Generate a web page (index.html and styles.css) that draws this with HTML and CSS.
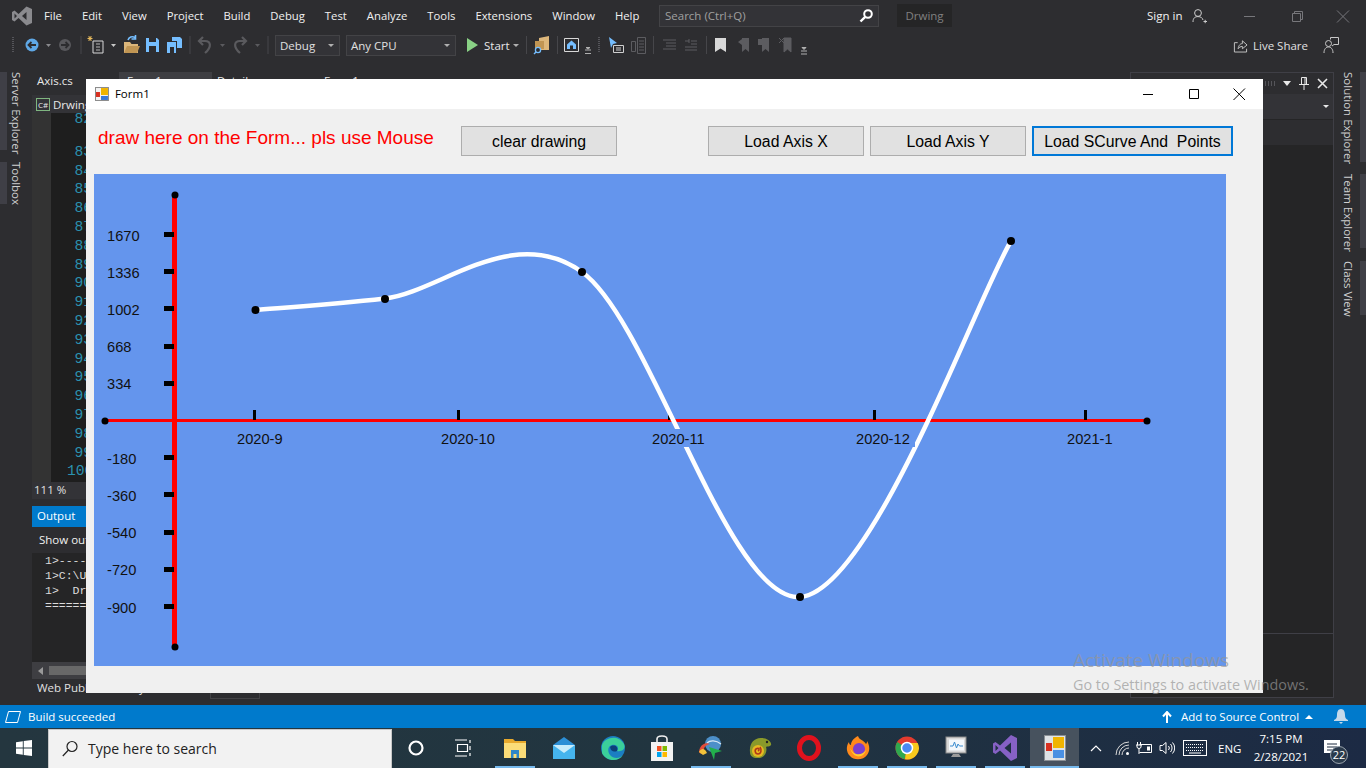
FILE: index.html
```html
<!DOCTYPE html>
<html lang="en">
<head>
    <meta charset="UTF-8">
    <title>Drwing - Form1</title>
    <link rel="stylesheet" href="styles.css">
</head>
<body>
    <div class="ide">
        <!-- barra de titulo -->
        <div class="titlebar">
            <svg class="vs-logo" width="20" height="20" viewBox="0 0 20 20"><path d="M14.5 0.5 L20 3 V17 L14.5 19.5 L6.5 12 L2.5 15.5 L0 14 V6 L2.5 4.5 L6.5 8 Z M14.5 6 L10 10 L14.5 14 Z M2.5 7.5 V12.5 L5 10 Z" fill="#8a8a8e" fill-rule="evenodd"/></svg>
            <nav class="menu">
                <span>File</span><span>Edit</span><span>View</span><span>Project</span><span>Build</span><span>Debug</span><span>Test</span><span>Analyze</span><span>Tools</span><span>Extensions</span><span>Window</span><span>Help</span>
            </nav>
            <div class="searchbox">
                <span>Search (Ctrl+Q)</span>
                <svg width="16" height="16" viewBox="0 0 16 16"><circle cx="10" cy="6" r="3.8" fill="none" stroke="#fff" stroke-width="2"/><path d="M7.2 8.8 L2.5 13.5" stroke="#fff" stroke-width="2.4"/></svg>
            </div>
            <div class="solution-name">Drwing</div>
            <div class="signin">Sign in</div>
            <svg class="user-ic" width="15" height="16" viewBox="0 0 15 16"><circle cx="6" cy="5" r="3.4" fill="none" stroke="#ccc"/><path d="M1 14 C1 10 3 8.6 6 8.6 C9 8.6 10.5 10 11 12 M11.5 13.5 H15 M13.2 11.8 V15.2" fill="none" stroke="#ccc"/></svg>
            <svg class="win-btns" width="107" height="14" viewBox="0 0 107 14"><path d="M0 7.5 H11" stroke="#77777b"/><path d="M48.5 4.5 H56.5 V12.5 H48.5 Z M50.5 4.5 V2.5 H58.5 V10.5 H56.5" fill="none" stroke="#77777b"/><path d="M93 1.500 L105 13.500 M105 1.500 L93 13.500" stroke="#77777b"/></svg>
        </div>

        <!-- barra de ferramentas -->
        <div class="toolbar">
            <svg class="strip-a" width="275" height="24" viewBox="0 0 275 24">
                <path d="M13 4 V20" stroke="#55555a" stroke-width="2" stroke-dasharray="1 1"/>
                <circle cx="32" cy="12" r="6.5" fill="#5fa8e6"/><path d="M36 12 H29 M31.5 9 L28.5 12 L31.5 15" fill="none" stroke="#2d2d30" stroke-width="1.8"/>
                <path d="M46 11 H51 L48.5 14 Z" fill="#8a8a8e"/>
                <circle cx="65" cy="12" r="6" fill="#58585c"/><path d="M61 12 H68 M65.5 9 L68.5 12 L65.5 15" fill="none" stroke="#2d2d30" stroke-width="1.8"/>
                <path d="M81 3 V21" stroke="#46464a"/>
                <path d="M93 8 H103 V20 H93 Z" fill="none" stroke="#d8d8d8"/><path d="M96 11 H100 M96 14 H100 M96 17 H100" stroke="#d8d8d8" stroke-width=".8"/><path d="M90 3 V8 M87.5 5.5 H92.5 M88.5 3.5 L91.5 7.5 M91.5 3.5 L88.5 7.5" stroke="#e6b95c"/>
                <path d="M111 11 H116 L113.5 14 Z" fill="#c8c8c8"/>
                <path d="M124 9 H130 L131.5 11 H138 V20 H124 Z" fill="#dcb67a"/><path d="M124 20 L127 13 H140 L137 20 Z" fill="#c09553"/><path d="M128 7 C129 4 132 3 135 4.500 M135.500 2 V6 H131.500" fill="none" stroke="#75beff" stroke-width="1.6"/>
                <path d="M146 5 H157 L159 7 V19 H146 Z" fill="#75beff"/><path d="M149 5 H156 V9 H149 Z M149 13 H156 V19 H149 Z" fill="#2d2d30"/>
                <path d="M167 9 H176 V20 H167 Z" fill="#75beff"/><path d="M170 14 H174 V20 H170 Z" fill="#2d2d30"/><path d="M172 4 H180 L182 6 V15 H177 V8 H172 Z" fill="#75beff"/>
                <path d="M190 3 V21" stroke="#46464a"/>
                <path d="M205 20 C212 14 211 8 205 8 H200 M203 4 L199 8 L203 12" fill="none" stroke="#5a5a5e" stroke-width="2.2"/>
                <path d="M220 11 H225 L222.500 14 Z" fill="#5a5a5e"/>
                <path d="M240 20 C233 14 234 8 240 8 H245 M242 4 L246 8 L242 12" fill="none" stroke="#5a5a5e" stroke-width="2.2"/>
                <path d="M255 11 H260 L257.500 14 Z" fill="#5a5a5e"/>
                <path d="M268 3 V21" stroke="#46464a"/>
            </svg>
            <div class="combo combo-debug"><span>Debug</span><i class="caret"></i></div>
            <div class="combo combo-cpu"><span>Any CPU</span><i class="caret"></i></div>
            <svg class="play" width="11" height="14" viewBox="0 0 11 14"><path d="M0 0 L11 7 L0 14 Z" fill="#89d185"/></svg>
            <span class="start">Start</span>
            <i class="caret caret-start"></i>
            <svg class="strip-b" width="300" height="24" viewBox="525 0 300 24">
                <path d="M525.500 3 V21" stroke="#46464a"/>
                <path d="M538 5 L548 3 V17 H538 Z" fill="#dcb67a"/><path d="M534 8 H543 V16 H534 Z" fill="#c09553"/><circle cx="537" cy="17" r="2.600" fill="#2d2d30" stroke="#75beff" stroke-width="1.300"/><path d="M535 19 L533 21" stroke="#75beff" stroke-width="1.500"/>
                <path d="M556.500 3 V21" stroke="#46464a"/>
                <path d="M563.500 5.500 H577.500 V18.500 H563.500 Z" fill="none" stroke="#d8d8d8"/><path d="M570.500 7.500 L575 11.500 V16 H566 V11.500 Z" fill="#75beff"/><path d="M569 12.500 H572 V16 H569 Z" fill="#2d2d30"/>
                <path d="M584 17 H590 M584 20.500 H590 M585 14.500 H589 L587 16 Z" stroke="#b0b0b0" fill="#b0b0b0"/>
                <path d="M598 4 V20" stroke="#55555a" stroke-width="2" stroke-dasharray="1 1"/>
                <path d="M608 4 L616 10 L612 11 L610 15 Z" fill="#75beff"/><path d="M612.500 12.500 H622.500 V19.500 H612.500 Z M615 15 H620 M615 17 H620" fill="none" stroke="#d0d0d0"/>
                <path d="M630.500 8.500 H634.500 V18.500 H630.500 Z M636.500 4.500 H644.500 V20.500 H636.500 Z M638 8 H643 M638 11 H643 M638 14 H643 M638 17 H643" fill="none" stroke="#5c5c60"/>
                <path d="M652.500 3 V21" stroke="#46464a"/>
                <path d="M662 7 H675 M665 10 H675 M665 13 H675 M662 16 H675" stroke="#5c5c60"/>
                <path d="M684 8 H688 M688 6 V10 M690 8 H696 M690 11 H696 M684 14 H696 M684 17 H696" stroke="#5c5c60"/>
                <path d="M705.500 3 V21" stroke="#46464a"/>
                <path d="M714 5 H725 V19 L719.500 15.500 L714 19 Z" fill="#d8d8d8"/>
                <path d="M741 5 H748 V19 L744.500 16 L741 19 Z M737 9 L741 6 V12 Z" fill="#5c5c60"/>
                <path d="M761 5 H768 V19 L764.500 16 L761 19 Z M757 6 H761 L764 9 L761 12 H757 Z" fill="#5c5c60"/>
                <path d="M783 5 H790 V19 L786.500 16 L783 19 Z M778 5 L783 10 M783 5 L778 10" fill="#5c5c60" stroke="#5c5c60"/>
                <path d="M800 18 H806 M800 21 H806 M801 14.500 H805 L803 16.500 Z" stroke="#b0b0b0" fill="#b0b0b0"/>
            </svg>
            <div class="liveshare">
                <svg width="16" height="16" viewBox="0 0 16 16"><path d="M1.500 5.500 V15.500 H14.500 V12 M1.500 5.500 H5" fill="none" stroke="#c8c8c8"/><path d="M5.500 12 C6 8 8 6.500 10 6.500 V3.500 L15 8 L10 12 V9.500 C8 9.500 6.500 10.500 5.500 12 Z" fill="none" stroke="#c8c8c8"/></svg>
                <span>Live Share</span>
            </div>
            <svg class="feedback" width="16" height="17" viewBox="0 0 16 17"><path d="M7.500 2.500 V0.500 H15.500 V7.500 H11 L9 9" fill="none" stroke="#c8c8c8"/><circle cx="5.500" cy="6.500" r="3" fill="none" stroke="#c8c8c8"/><path d="M1 16 C1 12 3 10 5.500 10 C8 10 10 12 10 16" fill="none" stroke="#c8c8c8"/></svg>
        </div>

        <div class="workspace">
            <aside class="rail rail-left">
                <div class="rail-tab tab-server"><span>Server Explorer</span></div>
                <div class="rail-tab tab-toolbox"><span>Toolbox</span></div>
            </aside>

            <div class="center">
                <div class="doc-tabs">
                    <span class="doc-tab">Axis.cs</span>
                    <span class="doc-tab doc-tab-on">Form1.cs</span>
                    <span class="doc-tab doc-tab-det">Details</span>
                    <span class="doc-tab">Form1.cs [Design]</span>
                </div>
                <div class="doc-nav">
                    <span class="cs-badge">C#</span>
                    <span>Drwing</span>
                </div>
                <div class="editor">
                    <div class="margin"></div>
                    <div class="lines">
                        <div class="line-first">82</div>
                        <div>83</div><div>84</div><div>85</div><div>86</div><div>87</div><div>88</div><div>89</div><div>90</div><div>91</div><div>92</div><div>93</div><div>94</div><div>95</div><div>96</div><div>97</div><div>98</div><div>99</div><div>100</div>
                    </div>
                </div>
                <div class="zoombar">111 %</div>
                <div class="output">
                    <div class="output-tab">Output</div>
                    <div class="output-head">Show output</div>
                    <pre class="output-text">1&gt;-----
1&gt;C:\U
1&gt;  Dr
=======</pre>
                    <div class="hscroll"><i class="arrow-left"></i><i class="thumb"></i></div>
                </div>
                <div class="bottom-tabs">
                    <span>Web Publish Activity</span>
                    <i class="bottom-box"></i>
                </div>
            </div>

            <div class="side-panel">
                <div class="side-head">
                    <i class="grip"></i>
                    <i class="tri"></i>
                    <svg width="10" height="13" viewBox="0 0 10 13"><path d="M2.500 .5 H7.500 V7.500 H2.500 Z M0 7.500 H10 M5 7.500 V13 M6 1 V7" fill="none" stroke="#e8e8e8"/></svg>
                    <svg width="11" height="11" viewBox="0 0 11 11"><path d="M1 1 L10 10 M10 1 L1 10" stroke="#e8e8e8" stroke-width="1.600"/></svg>
                </div>
                <div class="side-row"><i class="tri tri-small"></i></div>
                <div class="side-row2"></div>
                <div class="side-body"></div>
            </div>

            <aside class="rail rail-right">
                <div class="rail-tab tab-solution"><span>Solution Explorer</span></div>
                <div class="rail-tab tab-team"><span>Team Explorer</span></div>
                <div class="rail-tab tab-class"><span>Class View</span></div>
            </aside>
        </div>

        <div class="statusbar">
            <svg width="16" height="12" viewBox="0 0 16 12"><path d="M3.500 .5 H15.500 L12.500 11.500 H.5 Z" fill="none" stroke="#fff"/></svg>
            <span class="status-text">Build succeeded</span>
            <svg class="src-up" width="10" height="12" viewBox="0 0 10 12"><path d="M5 12 V2 M1 5.500 L5 1 L9 5.500" fill="none" stroke="#fff" stroke-width="2"/></svg>
            <span class="status-src">Add to Source Control</span>
            <i class="up-tri"></i>
            <svg class="bell" width="14" height="15" viewBox="0 0 14 15"><path d="M7 0 C10 0 11 3 11 6 C11 9 12 10 14 11 V12 H0 V11 C2 10 3 9 3 6 C3 3 4 0 7 0 Z M5 13 H9 L7 15 Z" fill="#c4d9ea"/></svg>
        </div>
    </div>

    <!-- janela do form por cima do VS -->
    <div class="form-win">
        <div class="form-title">
            <svg width="14" height="14" viewBox="0 0 14 14"><rect x=".5" y=".5" width="13" height="13" fill="#f4f4f4" stroke="#8a8a8a"/><rect x="6" y="1" width="7" height="7" fill="#f0b400"/><rect x="1" y="5" width="4" height="5" fill="#d83020"/><rect x="6" y="9" width="7" height="4" fill="#3a78d8"/></svg>
            <span>Form1</span>
            <svg class="form-btns" width="130" height="14" viewBox="0 0 130 14"><path d="M10 7.500 H20" stroke="#000"/><path d="M56.500 2.500 H65.500 V11.500 H56.500 Z" fill="none" stroke="#000"/><path d="M100.500 1.500 L112 13 M112 1.500 L100.500 13" stroke="#000"/></svg>
        </div>
        <div class="form-bar">
            <div class="hint">draw here on the Form... pls use Mouse</div>
            <button class="btn btn-clear">clear drawing</button>
            <button class="btn btn-x">Load Axis X</button>
            <button class="btn">Load Axis Y</button>
            <button class="btn btn-focus">Load SCurve And&nbsp; Points</button>
        </div>
        <svg class="chart" width="1132" height="492" viewBox="94 174 1132 492">
            <!-- eixos -->
            <path class="axis-y" d="M174.500 195 V647"/>
            <path class="axis-x" d="M105 420.500 H1147"/>
            <path class="tick" d="M164 234.500 H174 M164 271.500 H174 M164 308.500 H174 M164 346.500 H174 M164 383.500 H174 M164 457.500 H174 M164 494.500 H174 M164 532.500 H174 M164 569.500 H174 M164 606.500 H174"/>
            <path class="tick-x" d="M254.500 410 V420 M458.500 410 V420 M669.500 410 V420 M874.500 410 V420 M1085.500 410 V420"/>
            <!-- curva -->
            <path class="curve" d="M255 310 C276.700 308.100 330.500 304.800 385 298.500 C439.500 292.200 512.800 222.250 582 272 C651.200 321.750 728.500 602.200 800 597 C871.500 591.800 975.800 300.300 1011 241"/>
            <!-- labels do eixo X tem fundo proprio -->
            <rect class="lab-bg" x="234" y="429" width="62" height="18"/>
            <rect class="lab-bg" x="438" y="429" width="62" height="18"/>
            <rect class="lab-bg" x="649" y="429" width="62" height="18"/>
            <rect class="lab-bg" x="853" y="429" width="62" height="18"/>
            <rect class="lab-bg" x="1064" y="429" width="62" height="18"/>
            <text x="237" y="444">2020-9</text>
            <text x="441" y="444">2020-10</text>
            <text x="652" y="444">2020-11</text>
            <text x="856" y="444">2020-12</text>
            <text x="1067" y="444">2021-1</text>
            <text x="107" y="241">1670</text>
            <text x="107" y="278">1336</text>
            <text x="107" y="315">1002</text>
            <text x="107" y="352">668</text>
            <text x="107" y="389">334</text>
            <text x="107" y="464">-180</text>
            <text x="107" y="501">-360</text>
            <text x="107" y="538">-540</text>
            <text x="107" y="575">-720</text>
            <text x="107" y="613">-900</text>
            <!-- pontos -->
            <circle cx="175" cy="195" r="3.500"/>
            <circle cx="175" cy="647" r="3.500"/>
            <circle cx="105" cy="421" r="3.500"/>
            <circle cx="1147" cy="421" r="3.500"/>
            <circle cx="255.500" cy="310" r="4"/>
            <circle cx="385" cy="299" r="4"/>
            <circle cx="582" cy="272" r="4"/>
            <circle cx="800" cy="597" r="4"/>
            <circle cx="1011" cy="241" r="4"/>
        </svg>
    </div>

    <div class="watermark">
        <div class="wm-big">Activate Windows</div>
        <div class="wm-small">Go to Settings to activate Windows.</div>
    </div>

    <!-- barra de tarefas -->
    <div class="taskbar">
        <div class="start-btn">
            <svg width="16" height="16" viewBox="0 0 16 16"><path d="M0 2.300 L6.800 1.300 V7.500 H0 Z M7.700 1.100 L16 0 V7.500 H7.700 Z M0 8.400 H6.800 V14.700 L0 13.700 Z M7.700 8.400 H16 V16 L7.700 14.900 Z" fill="#fff"/></svg>
        </div>
        <div class="task-search">
            <svg width="16" height="17" viewBox="0 0 16 17"><circle cx="10" cy="6.500" r="5" fill="none" stroke="#222" stroke-width="1.200"/><path d="M6.500 10 L.8 16" stroke="#222" stroke-width="1.200"/></svg>
            <span>Type here to search</span>
        </div>
        <div class="task task-cortana"><svg width="16" height="16" viewBox="0 0 16 16"><circle cx="8" cy="8" r="6.500" fill="none" stroke="#fff" stroke-width="2.200"/></svg></div>
        <div class="task task-view"><svg width="18" height="18" viewBox="0 0 18 18"><path d="M1 1 H13 M1 17 H13 M3.500 5.500 H13.500 V12.500 H3.500 Z M16 1 V4 M16 7 V11 M16 14 V17" fill="none" stroke="#fff" stroke-width="1.200"/></svg></div>
        <div class="task task-run"><svg width="24" height="24" viewBox="0 0 24 24"><path d="M1 3 H10 L12 5 H23 V22 H1 Z" fill="#e8a92c"/><path d="M1 7 H23 V22 H1 Z" fill="#fbdc78"/><path d="M8 14 H16 V22 H13.500 V18 H10.500 V22 H8 Z" fill="#2f86c8"/></svg></div>
        <div class="task"><svg width="24" height="24" viewBox="0 0 24 24"><path d="M1 9 L12 1 L23 9 V23 H1 Z" fill="#2c8fd6"/><path d="M1 9 H23 V23 H1 Z" fill="#45b4ee"/><path d="M1 9 L12 17 L23 9" fill="#c8ecfb"/></svg></div>
        <div class="task"><svg width="26" height="26" viewBox="0 0 26 26"><circle cx="13" cy="13" r="12" fill="#1b7ec2"/><path d="M2 10 C5 2 18 -1 24 9 C26 14 22 17 17 16 C20 12 16 9 12 10 C8 11 7 16 10 20 C13 24 20 24 23 20 C19 27 6 27 2 18 Z" fill="#3bcf9a"/><path d="M10 12 C13 9 19 11 17 16 C14 17 11 17 10 12 Z" fill="#0c3f78"/></svg></div>
        <div class="task"><svg width="22" height="26" viewBox="0 0 22 26"><path d="M6 8 V4 C6 0 16 0 16 4 V8" fill="none" stroke="#eee" stroke-width="1.600"/><rect x="0" y="7" width="22" height="19" fill="#f2f2f2"/><rect x="6" y="11" width="4.500" height="5" fill="#f25022"/><rect x="11.500" y="11" width="4.500" height="5" fill="#7fba00"/><rect x="6" y="17" width="4.500" height="5" fill="#00a4ef"/><rect x="11.500" y="17" width="4.500" height="5" fill="#ffb900"/></svg></div>
        <div class="task task-run"><svg width="26" height="26" viewBox="0 0 26 26"><circle cx="15" cy="9" r="8" fill="#4c8fc9"/><path d="M9 8 C12 5 18 5 23 9" fill="none" stroke="#d9e8f5" stroke-width="1.200"/><path d="M1 17 C2 9 8 7 12 9 C7 10 5 13 6 18 C4 19 2 19 1 17 Z" fill="#e44c3a"/><path d="M1 17 C4 12 7 14 9 18 L5 20 Z" fill="#f2c23a"/><path d="M11 12 L24 16 L17 18 L16 25 Z" fill="#22b14c"/></svg></div>
        <div class="task"><svg width="24" height="24" viewBox="0 0 24 24"><path d="M2 16 C1 7 7 1 14 2 C19 2 24 6 23 9 C22 11 19 10 18 11 C20 17 15 23 9 22 C5 22 2 20 2 16 Z" fill="#8a9a2a"/><circle cx="10" cy="15" r="6" fill="#e8b820"/><path d="M10 15 C12 14 11 12 9 12.500 C6 13.500 7 18 10 18 C13 18 14 14 12 11" fill="none" stroke="#b0381a" stroke-width="1.600"/><circle cx="19" cy="6" r="1.200" fill="#222"/></svg></div>
        <div class="task"><svg width="24" height="26" viewBox="0 0 24 26"><ellipse cx="12" cy="13" rx="9.500" ry="10.500" fill="none" stroke="#e0121d" stroke-width="5"/></svg></div>
        <div class="task task-run"><svg width="24" height="26" viewBox="0 0 24 26"><path d="M12 1 C13 5 18 5 20 9 C21 8 21 7 21 6 C24 11 24 16 21 20 C18 25 8 26 4 21 C0 17 0 11 3 7 C3 9 4 10 5 10 C5 6 8 3 12 1 Z" fill="#ff8a1c"/><circle cx="13" cy="14" r="6" fill="#7b3fd0"/><path d="M4 12 C6 20 15 22 20 15 C18 24 6 24 4 12 Z" fill="#ffcc2f"/></svg></div>
        <div class="task task-run"><svg width="24" height="24" viewBox="0 0 24 24"><circle cx="12" cy="12" r="11.500" fill="#e33b2e"/><path d="M12 12 L2.200 6 A11.500 11.500 0 0 0 10 23.300 Z" fill="#2fa84f"/><path d="M12 7 H22.700 A11.500 11.500 0 0 1 10 23.300 Z" fill="#f8c91c"/><circle cx="12" cy="12" r="5.500" fill="#4a8af4" stroke="#fff" stroke-width="1.500"/></svg></div>
        <div class="task task-run"><svg width="24" height="24" viewBox="0 0 24 24"><rect x="2" y="1" width="20" height="16" fill="#d8d8d8" stroke="#8a8a8a"/><rect x="5" y="3.500" width="15" height="11" fill="#f4f8fc"/><path d="M6 10 H9 L10.500 6 L12.500 12 L14 8 L15.500 10 H19" fill="none" stroke="#3a8cd0"/><path d="M9 18 H15 L17 21 H7 Z" fill="#9a9a9a"/></svg></div>
        <div class="task task-run"><svg width="24" height="26" viewBox="0 0 24 26"><path d="M18 0 L24 3 V23 L18 26 L7 15.500 L2.500 19 L0 17.500 V8.500 L2.500 7 L7 10.500 Z M18 7.500 L11.500 13 L18 18.500 Z M2.500 10 V16 L5.500 13 Z" fill-rule="evenodd" fill="#8661c5"/></svg></div>
        <div class="task task-active"><svg width="22" height="26" viewBox="0 0 22 26"><rect x=".5" y=".5" width="21" height="25" fill="#dfe3e6" stroke="#8a8f94"/><rect x="9" y="2" width="11" height="11" fill="#f0b400"/><rect x="2" y="8" width="6" height="8" fill="#d83020"/><rect x="9" y="15" width="11" height="8" fill="#4a90e2"/></svg></div>
        <div class="tray">
            <svg class="tray-caret" width="12" height="8" viewBox="0 0 12 8"><path d="M1 7 L6 2 L11 7" fill="none" stroke="#fff" stroke-width="1.200"/></svg>
            <svg class="tray-net" width="16" height="16" viewBox="0 0 16 16"><path d="M2 15 A13 13 0 0 1 15 2 M5 15 A10 10 0 0 1 15 5 M8 15 A7 7 0 0 1 15 8" fill="none" stroke="#d8d8d8" stroke-width="1"/><circle cx="13.500" cy="13.500" r="1.500" fill="#fff"/></svg>
            <svg class="tray-bat" width="17" height="14" viewBox="0 0 17 14"><path d="M3.500 3.500 H15.500 V11.500 H3.500" fill="none" stroke="#fff"/><rect x="11" y="5.500" width="3" height="4" fill="#fff"/><path d="M0 4 H6 M1.500 1 V4 M4.500 1 V4 M3 8 V13 M1 4 V6 C1 8 5 8 5 6 V4" fill="none" stroke="#fff"/></svg>
            <svg class="tray-vol" width="16" height="16" viewBox="0 0 16 16"><path d="M1 5.500 H3.500 L7 2.500 V13.500 L3.500 10.500 H1 Z" fill="none" stroke="#fff"/><path d="M9.500 6 A3 3 0 0 1 9.500 10 M11.500 4 A6 6 0 0 1 11.500 12 M13.500 2.500 A8 8 0 0 1 13.500 13.500" fill="none" stroke="#fff"/></svg>
            <svg class="tray-kbd" width="24" height="16" viewBox="0 0 24 16"><rect x=".5" y=".5" width="23" height="15" fill="none" stroke="#fff"/><path d="M3 4.500 H21 M3 7.500 H21 M3 10.500 H21" stroke="#fff" stroke-dasharray="1 1"/><path d="M6 13 H18" stroke="#fff"/></svg>
            <span class="lang">ENG</span>
            <div class="clock"><div>7:15 PM</div><div>2/28/2021</div></div>
            <div class="notif">
                <svg width="16" height="16" viewBox="0 0 16 16"><path d="M0 0 H16 V13 H0 Z" fill="#fff"/><path d="M3 4 H13 M3 7 H13 M3 10 H10" stroke="#1d2b3e"/></svg>
                <span class="badge">22</span>
            </div>
        </div>
    </div>
</body>
</html>
```

FILE: styles.css
```css
* {
    padding: 0;
    margin: 0;
    box-sizing: border-box;
}

html, body {
    width: 1366px;
    height: 768px;
    overflow: hidden;
}

body {
    position: relative;
    background: #2d2d30;
    font-family: 'Open Sans', 'Noto Sans', Arial, sans-serif;
    font-size: 11.5px;
    color: #f1f1f1;
}

i {
    display: block;
}

/* VS */
.ide {
    height: 728px;
    display: flex;
    flex-direction: column;
}

.titlebar {
    height: 33px;
    flex: none;
    display: flex;
    align-items: center;
    padding-left: 12px;
    padding-bottom: 2px;
}

.vs-logo {
    flex: none;
}

.menu {
    display: flex;
    gap: 20px;
    margin-left: 12px;
    width: 615px;
    font-size: 11.3px;
}

.searchbox {
    width: 220px;
    height: 22px;
    display: flex;
    align-items: center;
    justify-content: space-between;
    padding: 0 4px 0 5px;
    background: #333337;
    border: 1px solid #434346;
    color: #a0a0a0;
}

.solution-name {
    width: 55px;
    height: 23px;
    margin-left: 18px;
    background: #252526;
    color: #808080;
    text-align: center;
    line-height: 23px;
}

.signin {
    margin-left: 195px;
    width: 45px;
}

.user-ic {
    flex: none;
}

.win-btns {
    margin-left: 37px;
    flex: none;
}

.toolbar {
    height: 24px;
    flex: none;
    display: flex;
    align-items: center;
}

.strip-a, .strip-b {
    flex: none;
}

.combo {
    height: 21px;
    display: flex;
    align-items: center;
    justify-content: space-between;
    padding: 0 5px 0 4px;
    background: #333337;
    border: 1px solid #434346;
    color: #e0e0e0;
}

.combo-debug {
    width: 65px;
    margin-right: 6px;
}

.combo-cpu {
    width: 110px;
}

.caret {
    width: 0;
    height: 0;
    border-left: 3px solid transparent;
    border-right: 3px solid transparent;
    border-top: 3px solid #b0b0b0;
}

.play {
    margin-left: 11px;
    flex: none;
}

.start {
    margin-left: 6px;
    width: 29px;
    color: #e8e8e8;
}

.caret-start {
    margin-right: 7px;
}

.liveshare {
    margin-left: auto;
    display: flex;
    align-items: center;
    gap: 5px;
    width: 75px;
    color: #e0e0e0;
    white-space: nowrap;
}

.feedback {
    margin-left: 15px;
    margin-right: 27px;
    flex: none;
}

.workspace {
    flex: 1;
    display: flex;
    margin-top: 15px;
    min-height: 0;
}

.rail {
    width: 32px;
    flex: none;
}

.rail-tab {
    writing-mode: vertical-rl;
    white-space: nowrap;
    width: 32px;
    line-height: 14px;
    color: #d0d0d0;
    background: linear-gradient(to right, #3f3f46 7px, transparent 7px);
    padding-right: 9px;
}

.rail-right .rail-tab {
    background: linear-gradient(to left, #3f3f46 6px, transparent 6px);
    padding-right: 11px;
}

.tab-server {
    height: 78px;
    margin-bottom: 12px;
}

.tab-toolbox {
    height: 42px;
}

.tab-solution {
    height: 90px;
    margin-bottom: 12px;
}

.tab-team {
    height: 74px;
    margin-bottom: 13px;
}

.tab-class {
    height: 54px;
}

.center {
    width: 1098px;
    flex: none;
    display: flex;
    flex-direction: column;
}

.doc-tabs {
    height: 22px;
    display: flex;
    flex: none;
    padding-left: 5px;
    line-height: 18px;
    color: #e8e8e8;
}

.doc-tab {
    width: 82px;
}

.doc-tab-on {
    background: #3e3e42;
    width: 93px;
    padding-left: 8px;
}

.doc-tab-det {
    width: 112px;
    padding-left: 5px;
}

.doc-nav {
    height: 18px;
    flex: none;
    margin-top: 1px;
    display: flex;
    align-items: center;
    gap: 3px;
    padding-left: 4px;
    background: #333337;
    color: #e8e8e8;
}

.cs-badge {
    width: 14px;
    height: 13px;
    border: 1px solid #7fb57f;
    font-size: 8px;
    line-height: 11px;
    text-align: center;
}

.editor {
    height: 369px;
    flex: none;
    display: flex;
    overflow: hidden;
}

.margin {
    width: 19px;
    background: #333333;
}

.lines {
    flex: 1;
    background: #1e1e1e;
    font-family: 'Liberation Mono', monospace;
    font-size: 14.67px;
    line-height: 18.8px;
    color: #2b91af;
    padding-left: 16px;
}

.lines div {
    width: 25px;
    text-align: right;
}

.lines .line-first {
    margin-top: -3px;
    margin-bottom: 14px;
}

.zoombar {
    height: 17px;
    flex: none;
    background: #333337;
    padding-left: 2px;
    line-height: 15px;
    color: #e0e0e0;
}

.output {
    height: 173px;
    flex: none;
    margin-top: 7px;
    display: flex;
    flex-direction: column;
    background: #252526;
}

.output-tab {
    width: 54px;
    height: 21px;
    background: #007acc;
    padding-left: 5px;
    line-height: 20px;
    color: #fff;
}

.output-head {
    height: 26px;
    background: #2d2d30;
    padding-left: 7px;
    line-height: 26px;
    white-space: nowrap;
}

.output-text {
    flex: 1;
    padding: 0 0 0 13px;
    font-family: 'Liberation Mono', monospace;
    font-size: 11.5px;
    line-height: 15px;
    color: #dcdcdc;
}

.hscroll {
    height: 17px;
    display: flex;
    align-items: center;
    background: #3e3e42;
    padding-left: 6px;
}

.arrow-left {
    width: 0;
    height: 0;
    border-top: 4px solid transparent;
    border-bottom: 4px solid transparent;
    border-right: 5px solid #999;
}

.thumb {
    margin-left: 6px;
    width: 400px;
    height: 9px;
    background: #686868;
}

.bottom-tabs {
    height: 20px;
    flex: none;
    display: flex;
    padding-left: 5px;
    line-height: 18px;
    color: #e0e0e0;
    white-space: nowrap;
}

.bottom-box {
    width: 50px;
    height: 16px;
    margin: 4px 0 0 65px;
    border: 1px solid #434346;
}

.side-panel {
    width: 204px;
    flex: none;
    height: 626px;
    border: 1px solid #3f3f46;
    background: #252526;
    display: flex;
    flex-direction: column;
}

.side-head {
    height: 21px;
    background: #2d2d30;
    display: flex;
    align-items: center;
    justify-content: flex-end;
    gap: 8px;
    padding-right: 5px;
}

.grip {
    width: 16px;
    height: 5px;
    background: repeating-linear-gradient(to right, #55555a 0 1px, transparent 1px 3px);
}

.tri {
    width: 0;
    height: 0;
    border-left: 4px solid transparent;
    border-right: 4px solid transparent;
    border-top: 5px solid #e8e8e8;
}

.tri-small {
    border-left-width: 3px;
    border-right-width: 3px;
    border-top-width: 3px;
}

.side-row {
    height: 25px;
    background: #333337;
    display: flex;
    align-items: center;
    justify-content: flex-end;
    padding-right: 4px;
}

.side-row2 {
    height: 25px;
    margin-top: 1px;
    background: #2d2d30;
}

.side-body {
    flex: 1;
    background: linear-gradient(to bottom, #252526 488px, #3f3f46 488px, #3f3f46 489px, #252526 489px);
}

.statusbar {
    height: 23px;
    flex: none;
    display: flex;
    align-items: center;
    background: #007acc;
    padding-left: 5px;
    color: #fff;
}

.status-text {
    margin-left: 7px;
    width: 1134px;
}

.status-src {
    margin-left: 9px;
    width: 124px;
}

.src-up {
    flex: none;
}

.up-tri {
    width: 0;
    height: 0;
    border-left: 4px solid transparent;
    border-right: 4px solid transparent;
    border-bottom: 4px solid #fff;
}

.bell {
    margin-left: 21px;
    flex: none;
}

/* Form */
.form-win {
    position: absolute;
    left: 86px;
    top: 79px;
    width: 1177px;
    height: 614px;
    background: #f0f0f0;
    font-family: 'Liberation Sans', Arial, sans-serif;
    color: #000;
}

.form-title {
    height: 30px;
    background: #fff;
    display: flex;
    align-items: center;
    padding-left: 9px;
    padding-bottom: 1px;
    font-family: 'Open Sans', 'Noto Sans', Arial, sans-serif;
    font-size: 11.5px;
}

.form-title span {
    margin-left: 6px;
    width: 1023px;
}

.form-title .form-btns {
    flex: none;
}

.form-bar {
    height: 65px;
    display: flex;
    padding-top: 17px;
    padding-left: 12px;
    align-items: flex-start;
}

.hint {
    width: 363px;
    color: #f00;
    font-size: 19px;
    line-height: 24px;
}

.btn {
    width: 156px;
    height: 30px;
    margin-right: 6px;
    padding-top: 2px;
    background: #e1e1e1;
    border: 1px solid #adadad;
    font-family: 'Liberation Sans', Arial, sans-serif;
    font-size: 15.8px;
    color: #000;
}

.btn-clear {
    margin-right: 91px;
}

.btn-focus {
    width: 201px;
    border: 2px solid #0078d7;
    margin-right: 0;
}

.chart {
    display: block;
    margin-left: 8px;
    background: #6495ed;
}

.chart text {
    font-family: 'Liberation Sans', Arial, sans-serif;
    font-size: 14.67px;
    fill: #111;
}

.chart circle {
    fill: #000;
}

.axis-y {
    stroke: #f00;
    stroke-width: 5;
    fill: none;
}

.axis-x {
    stroke: #f00;
    stroke-width: 3;
    fill: none;
}

.tick {
    stroke: #000;
    stroke-width: 5;
    fill: none;
}

.tick-x {
    stroke: #000;
    stroke-width: 3;
    fill: none;
}

.curve {
    stroke: #fff;
    stroke-width: 4.5;
    fill: none;
}

.lab-bg {
    fill: #6495ed;
}

.watermark {
    position: absolute;
    left: 1073px;
    top: 648px;
    color: rgba(150, 150, 150, .7);
    white-space: nowrap;
}

.wm-big {
    font-size: 19px;
    line-height: 25px;
}

.wm-small {
    font-size: 14.4px;
    line-height: 20px;
    margin-top: 2px;
}

/* Barra de tarefas */
.taskbar {
    height: 40px;
    display: flex;
    background: linear-gradient(to right, #24363f 0, #213540 50%, #1c2a44 100%);
}

.start-btn {
    width: 48px;
    display: flex;
    align-items: center;
    justify-content: center;
}

.task-search {
    width: 344px;
    display: flex;
    align-items: center;
    margin-top: 1px;
    padding-left: 13px;
    padding-bottom: 2px;
    background: #f2f2f2;
    border: 1px solid #c8c8c8;
    border-bottom: none;
    color: #222;
    font-size: 14px;
}

.task-search span {
    margin-left: 10px;
}

.task {
    width: 49px;
    flex: none;
    display: flex;
    align-items: center;
    justify-content: center;
}

.task-cortana {
    padding-right: 2px;
}

.task-view {
    padding-right: 5px;
}

.task-run {
    background: linear-gradient(#76b9ed, #76b9ed) no-repeat center bottom / 40px 2px;
}

.task-active {
    background: #47525e linear-gradient(#76b9ed, #76b9ed) no-repeat center bottom / 100% 2px;
    margin-left: 1px;
}

.tray {
    flex: 1;
    display: flex;
    align-items: center;
    color: #fff;
}

.tray svg {
    flex: none;
}

.tray-caret {
    margin-left: 11px;
}

.tray-net {
    margin-left: 12px;
}

.tray-bat {
    margin-left: 6px;
}

.tray-vol {
    margin-left: 6px;
}

.tray-kbd {
    margin-left: 8px;
}

.lang {
    margin-left: 11px;
    width: 27px;
    font-size: 11.5px;
}

.clock {
    width: 72px;
    text-align: center;
    font-size: 11.5px;
    line-height: 18px;
}

.notif {
    position: relative;
    margin-left: 7px;
    height: 16px;
}

.badge {
    position: absolute;
    left: 6px;
    top: 6px;
    width: 18px;
    height: 18px;
    border-radius: 50%;
    background: #2a3a4c;
    border: 1px solid #9aa4ae;
    font-size: 11px;
    line-height: 16px;
    text-align: center;
}
```
